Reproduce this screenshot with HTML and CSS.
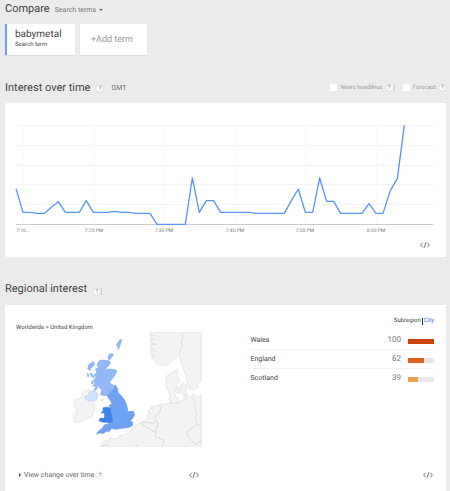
FILE: index.html
```html
<!DOCTYPE html>
<html lang="en">
<head>
<meta charset="utf-8">
<title>Compare search terms</title>
<link rel="stylesheet" href="styles.css">
</head>
<body>
<main class="page">
  <header class="compare">
    <h1 class="heading">Compare</h1>
    <button class="type-menu" type="button">Search terms <span class="caret-down"></span></button>
  </header>

  <div class="terms">
    <div class="term term-active">
      <span class="term-name">babymetal</span>
      <span class="term-type">Search term</span>
    </div>
    <button class="term term-add" type="button">+Add term</button>
  </div>

  <section>
    <div class="section-head section-head-time">
      <h2 class="heading">Interest over time</h2>
      <button class="help help-time" type="button">?</button>
      <span class="zone">GMT</span>
      <div class="options">
        <label class="option"><input class="check" type="checkbox">News headlines</label>
        <button class="help" type="button">?</button><span class="divider"></span>
        <label class="option option-next"><input class="check" type="checkbox">Forecast</label>
        <button class="help" type="button">?</button>
      </div>
    </div>
    <div class="card chart-card">
      <svg class="chart" viewBox="0 0 417 112" role="img" aria-label="Interest over time">
        <path class="grid grid-down" d="M7.500 1V100M78.500 1V100M148.500 1V100M219.500 1V100M289.500 1V100M360.500 1V100"/>
        <path class="grid" d="M0 1.500H417M0 21.500H417M0 41.500H417M0 60.500H417M0 80.500H417"/>
        <path class="axis" d="M0 100.500H417"/>
        <g transform="translate(0 1) scale(.33333) translate(-48 -89)">
          <polyline class="line" points="48,280 69,351 90,351 111,354 133,354 154,336 175,319 196,351 238,351 259,316 280,351 322,351 344,348 365,351 386,351 408,354 450,354 471,387 556,387 577,248 598,351 619,316 641,316 662,351 747,351 768,354 853,354 874,316 895,281 916,351 938,351 959,248 980,318 1001,318 1022,354 1086,354 1107,325 1128,354 1149,354 1171,286 1192,250 1213,90"/>
        </g>
        <g class="ticks">
          <text x="7" y="108">7:10...</text>
          <text x="78" y="108">7:20 PM</text>
          <text x="148" y="108">7:30 PM</text>
          <text x="219" y="108">7:40 PM</text>
          <text x="289" y="108">7:50 PM</text>
          <text x="360" y="108">8:00 PM</text>
        </g>
      </svg>
      <button class="embed" type="button" aria-label="Embed">
        <svg class="embed-icon" viewBox="0 0 10 6"><path d="M2.700 .7L.6 3l2.100 2.300M7.300 .7L9.400 3L7.300 5.300M5.900 .2L4.100 5.800"/></svg>
      </button>
    </div>
  </section>

  <section class="regional">
    <div class="section-head section-head-region">
      <h2 class="heading">Regional interest</h2>
      <button class="help help-region" type="button">?</button><span class="divider"></span>
    </div>
    <div class="card region-card">
      <div class="region-map">
        <div class="crumbs">Worldwide &gt; United Kingdom</div>
        <svg class="map" viewBox="36 21 390 345" role="img" aria-label="Map of the United Kingdom">
          <g class="land">
            <path d="M271 21L276 33L272 43L278 51L274 61L277 70L274 80L279 89L277 99L287 106L290 114L300 119L312 123L323 119L335 111L344 101L352 97L358 90L362 96L364 110L370 124L374 137L380 150L383 164L386 179L391 192L399 195L409 192L416 187L415 174L426 170V21Z"/>
            <path d="M354 133L344 139L337 143L323 152L320 165L321 183L327 196L331 209L330 222L335 233L349 236L362 232L358 222L350 213L345 204L349 193L353 185L350 176L361 170L357 159L353 148Z"/>
            <path d="M365 180L372 175L381 179L384 191L378 197L382 205L373 210L365 201ZM350 190L360 186L363 198L358 206L350 200ZM376 211L386 208L382 216L371 216Z"/>
            <path d="M426 211L414 215L405 207L393 214L382 222L371 222L362 231L349 236L335 232L327 235L315 238L302 237L298 242L283 243L274 247L268 259L265 275L256 286L244 293L231 300L221 307L215 318L205 324L193 331L183 329L179 339L163 341L153 337L151 345L135 347L127 357L125 366H426Z"/>
            <path d="M69 207L77 197L91 194L96 203L88 211L79 216L84 225L98 227L105 230L108 247L103 265L99 276L86 279L71 286L55 293L43 288L48 280L42 273L55 267L50 260L59 253L47 248L44 237L50 229L44 224L60 221L68 216Z"/>
          </g>
          <path class="water" d="M270 259L275 252L281 249L280 259L273 265Z"/>
          <g class="border">
            <path d="M367 21L372 37L366 50L369 65L362 75L361 88M272 29L284 33M273 40L290 46M275 49L284 57M276 61L293 58M275 70L286 74M277 82L292 78M279 93L289 88"/>
            <path d="M302 238L304 254L297 266L288 272L290 286L282 296L267 291L254 292L245 293M246 295L253 302L268 308L281 318L291 322L287 334L302 340L314 344L309 366M290 287L297 297L290 309L291 322M400 213L408 235L405 248L411 261L409 281L414 298L426 300M410 299L383 321L389 338L410 358L426 347M125 366L140 358L155 365M229 366L238 357"/>
          </g>
          <path class="ni" d="M91 201L101 197L112 201L117 213L111 225L99 226L92 230L79 221L78 214L87 211Z"/>
          <g class="scotland">
            <path d="M120 107L130 105L152 108L153 117L143 127L138 134L153 132L170 134L173 139L166 152L159 162L151 171L158 179L169 181L164 192L153 202L146 211L134 211L124 208L128 196L120 186L119 176L113 192L105 197L111 181L102 184L108 171L103 166L111 157L105 149L114 142L109 132L118 128L114 119Z"/>
            <path d="M104 110L106 119L97 127L92 137L86 131L89 119L97 113ZM85 145L90 149L87 156ZM93 143L101 148L106 158L97 154ZM149 89L155 86L163 87L158 97L150 105L147 98ZM184 42L188 46L184 58L178 73L175 63L171 61L178 51ZM99 167L105 172L97 177Z"/>
          </g>
          <path class="england" d="M169 181L175 189L177 203L188 213L197 227L202 238L205 250L205 260L222 258L226 268L222 278L212 288L221 291L220 301L208 307L194 308L183 310L169 312L157 309L151 318L142 318L134 324L120 323L113 327L117 319L130 309L136 299L154 295L160 288L157 274L153 260L155 249L150 241L159 236L154 227L145 213L154 201L164 193Z"/>
          <path class="wales" d="M132 248L145 246L154 249L154 260L158 274L160 288L152 294L142 291L132 291L120 287L123 279L136 279L137 270L136 262L127 264L132 257Z"/>
          <path class="land" d="M124 225L134 220L130 230Z"/>
        </svg>
      </div>

      <div class="region-data">
        <div class="tabs"><span>Subregion</span><span class="tab-line"></span><a href="#city">City</a></div>
        <table class="regions">
          <tr><td>Wales</td><td class="value">100</td><td class="bar-cell"><div class="bar"><div class="fill fill-high" style="width:100%"></div></div></td></tr>
          <tr><td>England</td><td class="value">62</td><td class="bar-cell"><div class="bar"><div class="fill fill-mid" style="width:62%"></div></div></td></tr>
          <tr><td>Scotland</td><td class="value">39</td><td class="bar-cell"><div class="bar"><div class="fill fill-low" style="width:39%"></div></div></td></tr>
        </table>
      </div>

      <div class="card-foot foot-map">
        <button class="view-change" type="button"><span class="caret-right"></span>View change over time</button>
        <button class="help" type="button">?</button>
        <button class="embed embed-foot" type="button" aria-label="Embed map">
          <svg class="embed-icon" viewBox="0 0 10 6"><path d="M2.700 .7L.6 3l2.100 2.300M7.300 .7L9.400 3L7.300 5.300M5.900 .2L4.100 5.800"/></svg>
        </button>
      </div>
      <div class="card-foot foot-table">
        <button class="embed embed-foot" type="button" aria-label="Embed table">
          <svg class="embed-icon" viewBox="0 0 10 6"><path d="M2.700 .7L.6 3l2.100 2.300M7.300 .7L9.400 3L7.300 5.300M5.900 .2L4.100 5.800"/></svg>
        </button>
      </div>
    </div>
  </section>
</main>
</body>
</html>
```

FILE: styles.css
```css
* {
  box-sizing: border-box;
}

body {
  margin: 0;
  background: #ebebeb;
  color: #444;
  font-family: Roboto, "Liberation Sans", sans-serif;
  font-size: 8px;
  line-height: 10px;
  text-rendering: geometricPrecision;
}

button {
  padding: 0;
  border: 0;
  background: none;
  color: inherit;
  font: inherit;
  text-rendering: inherit;
}

.page {
  display: flex;
  flex-direction: column;
  min-height: 100vh;
  padding: 0 4px 0 5px;
}

.heading {
  margin: 0;
  font-size: 11px;
  line-height: 16px;
  font-weight: 400;
}

.compare {
  display: flex;
  align-items: center;
  gap: 5px;
  height: 24px;
  padding-bottom: 7px;
}

.type-menu {
  display: flex;
  align-items: center;
  gap: 3px;
  padding-top: 2px;
  color: #777;
  font-size: 7px;
}

.caret-down {
  border: 2px solid transparent;
  border-top-color: #666;
  border-bottom: 0;
}

.terms {
  display: flex;
  gap: 5px;
  height: 31px;
}

.term {
  background: #fff;
  box-shadow: 0 1px 1px #ddd;
}

.term-active {
  display: flex;
  flex-direction: column;
  width: 70px;
  padding: 5px 0 0 8px;
  border-left: 2px solid #6ba0f6;
}

.term-name {
  font-size: 10px;
  line-height: 12px;
}

.term-type {
  font-size: 6px;
  line-height: 7px;
}

.term-add {
  width: 67px;
  padding-right: 3px;
  color: #999;
  font-size: 9px;
}

.section-head {
  display: flex;
  align-items: center;
}

.section-head-time {
  height: 48px;
  padding-top: 17px;
}

.section-head-region {
  height: 48px;
  padding-top: 16px;
}

.help {
  width: 7px;
  height: 7px;
  border-radius: 50%;
  background: #fafafa;
  box-shadow: 0 0 1px #aaa;
  color: #777;
  font-size: 6px;
  line-height: 7px;
  text-align: center;
}

.help-time {
  margin: 2px 8px 0 6px;
}

.help-region {
  margin: 4px 0 0 6px;
}

.divider {
  width: 1px;
  height: 7px;
  margin-left: 1px;
  background: #ccc;
}

.section-head-region .divider {
  margin-top: 4px;
}

.zone {
  color: #777;
  font-size: 7px;
}

.options {
  display: flex;
  align-items: center;
  margin-left: auto;
}

.option {
  display: flex;
  align-items: center;
  gap: 3px;
  margin-right: 3px;
  color: #999;
  font-size: 6px;
}

.option-next {
  margin-left: 8px;
}

.check {
  width: 7px;
  height: 7px;
  margin: 0;
  appearance: none;
  background: #fff;
}

.card {
  background: #fff;
}

.chart-card {
  display: flex;
  flex-direction: column;
  padding: 21px 13px 9px 11px;
}

.chart {
  display: block;
  width: 100%;
  overflow: visible;
}

.grid {
  fill: none;
  stroke: #f3f3f3;
}

.grid-down {
  stroke: #f9f9f9;
}

.axis {
  stroke: #ccc;
}

.line {
  fill: none;
  stroke: #5a95f5;
  stroke-width: 4;
  stroke-linejoin: round;
}

.ticks {
  fill: #777;
  font-size: 5px;
  text-anchor: middle;
}

.embed {
  align-self: flex-end;
  width: 10px;
  height: 6px;
  margin: 6px 3px 0 0;
}

.embed-icon {
  display: block;
  width: 10px;
  height: 6px;
  fill: none;
  stroke: #777;
}

.regional {
  display: flex;
  flex: 1;
  flex-direction: column;
}

.region-card {
  display: grid;
  flex: 1;
  grid-template-columns: 197fr 232fr;
  grid-template-rows: 1fr auto;
  padding: 0 0 11px 11px;
}

.region-map {
  padding-top: 19px;
}

.crumbs {
  height: 8px;
  color: #444;
  font-size: 6px;
  line-height: 8px;
}

.map {
  display: block;
  width: 66%;
  margin-left: 28%;
}

.land path,
path.land {
  fill: #f3f3f3;
  stroke: #ddd;
  stroke-width: 2;
}

.water {
  fill: #fff;
  stroke: #ddd;
  stroke-width: 2;
}

.border {
  fill: none;
  stroke: #dedede;
  stroke-width: 3;
}

.ni {
  fill: #cfe1fc;
  stroke: #b9d0f3;
  stroke-width: 2;
}

.scotland {
  fill: #92b9f6;
  stroke: #83abed;
  stroke-width: 2;
}

.england {
  fill: #6fa2f4;
  stroke: #6496e8;
  stroke-width: 2;
}

.wales {
  fill: #3d82f0;
  stroke: #3777e2;
  stroke-width: 2;
}

.region-data {
  padding: 11px 12px 0 37px;
}

.tabs {
  display: flex;
  align-items: center;
  justify-content: flex-end;
  gap: 1px;
  font-size: 6px;
}

.tab-line {
  width: 1px;
  height: 7px;
  background: #333;
}

.tabs a {
  color: #4272db;
  text-decoration: none;
}

.regions {
  width: 100%;
  margin-top: 5px;
  border-spacing: 0;
  font-size: 7px;
}

.regions td {
  height: 19px;
  padding: 0;
  border-bottom: 1px solid #f2f2f2;
}

.regions tr:last-child td {
  border-bottom-color: transparent;
}

.regions .value {
  color: #777;
  font-size: 8px;
  text-align: right;
}

.regions .bar-cell {
  width: 33px;
  padding: 2px 0 0 7px;
}

.bar {
  height: 5px;
  background: #e8e8e8;
}

.fill {
  height: 5px;
}

.fill-high {
  background: #cc4409;
}

.fill-mid {
  background: #dd611d;
}

.fill-low {
  background: #eea04b;
}

.card-foot {
  display: flex;
  align-items: center;
}

.foot-map {
  gap: 2px;
  padding: 0 14px 0 3px;
}

.foot-table {
  padding-right: 13px;
}

.view-change {
  display: flex;
  align-items: center;
  gap: 3px;
  color: #666;
  font-size: 7px;
}

.caret-right {
  border: 2px solid transparent;
  border-right: 0;
  border-left-color: #444;
}

.embed-foot {
  align-self: center;
  margin: 0 0 0 auto;
}
```
